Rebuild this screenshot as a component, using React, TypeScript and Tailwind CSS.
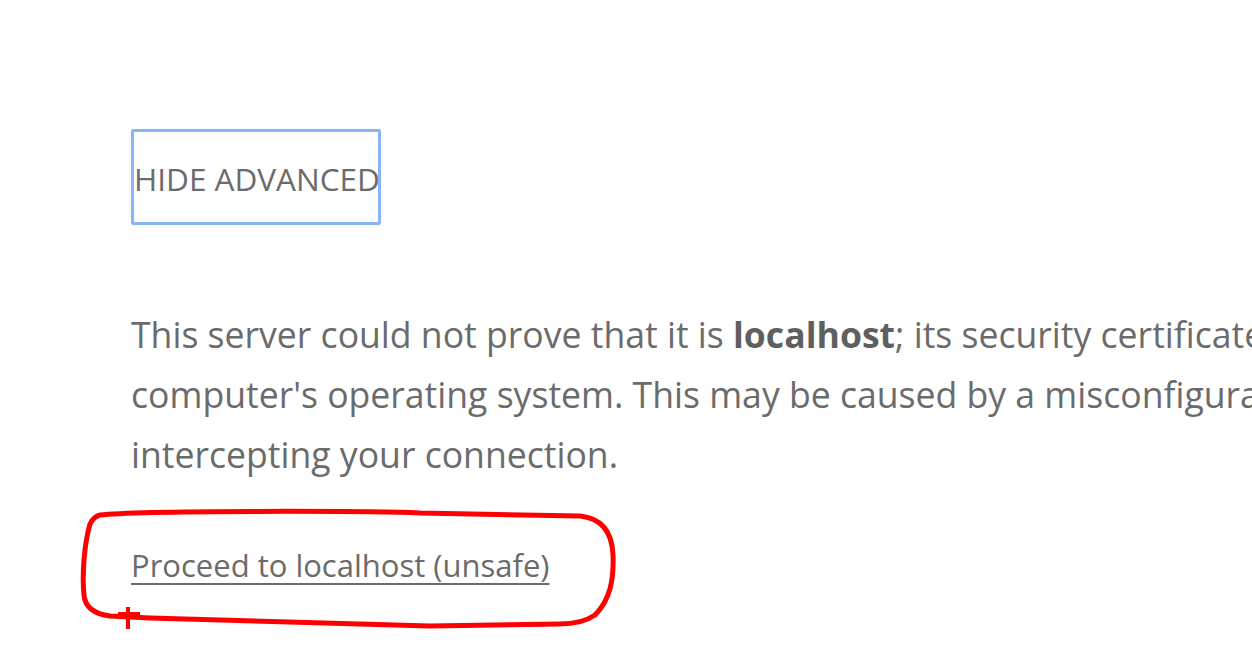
export default function App() {
  return (
    <div className="relative w-[1252px] h-[654px] overflow-hidden bg-white text-[#6b6b6b] font-['Open_Sans',sans-serif]">
      <div className="pl-[131px] pt-[129px]">
        <button className="w-[250px] h-[96px] border-[3px] border-[#8ab4f8] rounded-[2px] flex items-center pt-[4px] text-[31.5px] leading-none whitespace-nowrap text-[#6b6b6b]">
          HIDE ADVANCED
        </button>
        <p className="mt-[79px] text-[35.6px] leading-[60px] whitespace-nowrap">
          This server could not prove that it is <strong className="font-bold text-[#5f5f5f]">localhost</strong>; its security certificate is not trusted by your
          <br />
          computer's operating system. This may be caused by a misconfiguration or an attacker
          <br />
          intercepting your connection.
        </p>
        <a href="#" className="block mt-[51px] text-[31px] leading-[60px] underline underline-offset-[6px] decoration-[2px] whitespace-nowrap">
          Proceed to localhost (unsafe)
        </a>
      </div>
      <svg className="absolute inset-0 pointer-events-none" width="1252" height="654" viewBox="0 0 1252 654" fill="none">
        <path
          d="M 100 515 C 140 510, 380 511, 420 513 L 580 516 C 600 518, 612 530, 613 555 C 614 580, 610 600, 595 615 C 585 622, 570 624, 560 624 L 430 626 C 300 622, 200 620, 150 618 L 110 616 C 95 614, 85 608, 84 595 C 82 575, 84 545, 90 524 C 93 518, 96 516, 100 515 Z"
          stroke="#ff0000"
          strokeWidth="5"
          strokeLinejoin="round"
        />
        <path d="M 118 614 L 140 614 M 128 607 L 128 629" stroke="#ff0000" strokeWidth="4" />
      </svg>
    </div>
  );
}
